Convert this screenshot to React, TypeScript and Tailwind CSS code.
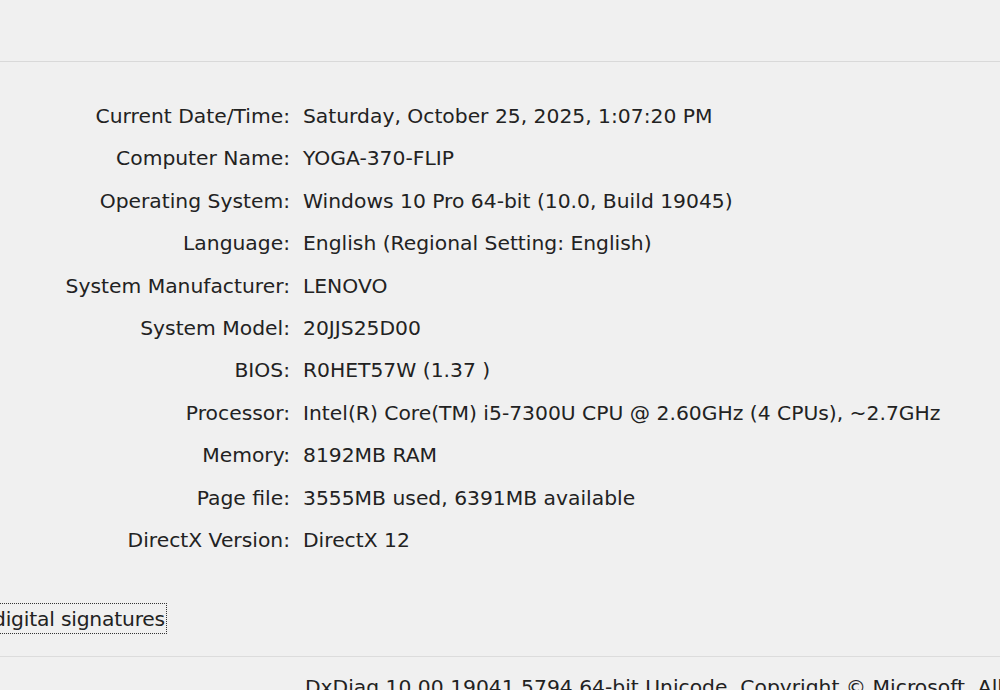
import React from 'react';

const rows: [string, string][] = [
  ['Current Date/Time:', 'Saturday, October 25, 2025, 1:07:20 PM'],
  ['Computer Name:', 'YOGA-370-FLIP'],
  ['Operating System:', 'Windows 10 Pro 64-bit (10.0, Build 19045)'],
  ['Language:', 'English (Regional Setting: English)'],
  ['System Manufacturer:', 'LENOVO'],
  ['System Model:', '20JJS25D00'],
  ['BIOS:', 'R0HET57W (1.37 )'],
  ['Processor:', 'Intel(R) Core(TM) i5-7300U CPU @ 2.60GHz (4 CPUs), ~2.7GHz'],
  ['Memory:', '8192MB RAM'],
  ['Page file:', '3555MB used, 6391MB available'],
  ['DirectX Version:', 'DirectX 12'],
];

const App: React.FC = () => {
  return (
    <div
      className="w-[1000px] h-[690px] overflow-hidden bg-[#f0f0f0] text-[#222] text-[20.3px] leading-none"
      style={{ fontFamily: '"DejaVu Sans", "Liberation Sans", sans-serif' }}
    >
      {/* top strip */}
      <div className="h-[62px] border-b border-[#d9d9d9]" />

      {/* system info grid */}
      <div className="grid grid-cols-[290px_1fr] gap-x-[13px] pt-[44px]">
        {rows.map(([label, value]) => (
          <React.Fragment key={label}>
            <div className="text-right h-[42.4px] whitespace-nowrap">{label}</div>
            <div className="h-[42.4px] whitespace-nowrap">{value}</div>
          </React.Fragment>
        ))}
      </div>

      {/* checkbox label with focus rect */}
      <div className="mt-[31px] flex">
        <span className="ml-[-7px] h-[31px] border border-dotted border-l-0 border-[#333] pt-[5px] pr-[1px] tracking-[-0.2px]">
          digital signatures
        </span>
      </div>

      {/* separator + footer */}
      <div className="mt-[22px] border-t border-[#dcdcdc]" />
      <div className="pl-[305px] pt-[20px] whitespace-nowrap">
        DxDiag 10.00.19041.5794 64-bit Unicode&nbsp;&nbsp;Copyright © Microsoft. All
      </div>
    </div>
  );
};

export default App;
